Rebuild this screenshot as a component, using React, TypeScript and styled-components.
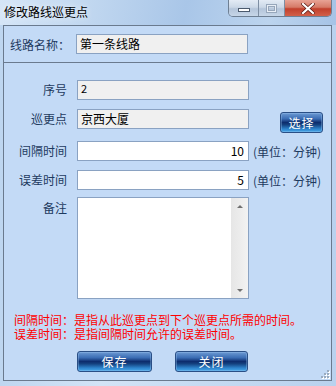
import React from "react"
import styled, { createGlobalStyle } from "styled-components"

const GlobalStyle = createGlobalStyle`
    html, body {
        margin: 0;
        padding: 0;
        background: #c9ddf2;
    }
    * {
        box-sizing: border-box;
    }
`

const font = `"Noto Sans CJK SC", "Noto Sans", sans-serif`

export default function App() {
    return (
        <>
            <GlobalStyle />
            <Window>
                <TitleBar>
                    <Title>修改路线巡更点</Title>
                    <Controls>
                        <CtrlButton $kind="min"><MinGlyph /></CtrlButton>
                        <CtrlButton $kind="max"><MaxGlyph /></CtrlButton>
                        <CtrlButton $kind="close">
                            <svg width="14" height="11" viewBox="0 0 14 11">
                                <path d="M2 1 L12 10 M12 1 L2 10" stroke="#5a1a14" strokeWidth="3.6" strokeLinecap="square" />
                                <path d="M2 1 L12 10 M12 1 L2 10" stroke="#ffffff" strokeWidth="2.2" strokeLinecap="square" />
                            </svg>
                        </CtrlButton>
                    </Controls>
                </TitleBar>
                <Client>
                    <NameSection>
                        <NameLabel>线路名称：</NameLabel>
                        <Field $readOnly $width={172}>第一条线路</Field>
                    </NameSection>
                    <DetailSection>
                        <Row $top={17}>
                            <Label>序号</Label>
                            <Field $readOnly $small>2</Field>
                        </Row>
                        <Row $top={9}>
                            <Label>巡更点</Label>
                            <Field $readOnly>京西大厦</Field>
                            <PickButton>选择</PickButton>
                        </Row>
                        <Row $top={12}>
                            <Label>间隔时间</Label>
                            <Field $right>10</Field>
                            <Unit>(单位：分钟)</Unit>
                        </Row>
                        <Row $top={9}>
                            <Label>误差时间</Label>
                            <Field $right>5</Field>
                            <Unit>(单位：分钟)</Unit>
                        </Row>
                        <Row $top={7} $alignTop>
                            <Label $pad={4}>备注</Label>
                            <MemoBox>
                                <MemoText />
                                <ScrollBar>
                                    <Arrow $up />
                                    <Arrow />
                                </ScrollBar>
                            </MemoBox>
                        </Row>
                        <Notes>
                            <NoteLine>间隔时间：是指从此巡更点到下个巡更点所需的时间。</NoteLine>
                            <NoteLine>误差时间：是指间隔时间允许的误差时间。</NoteLine>
                        </Notes>
                        <Actions>
                            <BlueButton $width={75}>保存</BlueButton>
                            <BlueButton $width={73}>关闭</BlueButton>
                        </Actions>
                        <Grip>
                            <svg width="9" height="9" viewBox="0 0 9 9">
                                {[[7, 1], [4, 4], [7, 4], [1, 7], [4, 7], [7, 7]].map(([x, y]) => (
                                    <rect key={`${x}-${y}`} x={x} y={y} width="2" height="2" fill="#ffffff" />
                                ))}
                                {[[6, 0], [3, 3], [6, 3], [0, 6], [3, 6], [6, 6]].map(([x, y]) => (
                                    <rect key={`d${x}-${y}`} x={x} y={y} width="2" height="2" fill="#9aabbf" />
                                ))}
                            </svg>
                        </Grip>
                    </DetailSection>
                </Client>
            </Window>
        </>
    )
}

const Window = styled.div`
    width: 336px;
    height: 386px;
    display: flex;
    flex-direction: column;
    background: linear-gradient(90deg, #bed6f0 0%, #d3e4f6 30%, #c6dbf2 60%, #b9d2ee 100%);
    font-family: ${font};
    overflow: hidden;
`

const TitleBar = styled.div`
    height: 25px;
    flex: none;
    display: flex;
    align-items: flex-start;
    justify-content: space-between;
    padding-left: 4px;
    background: linear-gradient(100deg, #d6e6f7 0%, #c2d8f0 25%, #a9c6e8 55%, #bcd4ee 80%, #a6c3e6 100%);
`

const Title = styled.div`
    margin-top: 4px;
    font-size: 12px;
    line-height: 16px;
    color: #000;
    text-shadow: 0 0 6px rgba(255, 255, 255, 0.9);
`

const Controls = styled.div`
    display: flex;
    margin-right: 4px;
    height: 17px;
    border: 1px solid #6e7f93;
    border-top: none;
    border-radius: 0 0 5px 5px;
    overflow: hidden;
`

const CtrlButton = styled.div<{ $kind: "min" | "max" | "close" }>`
    width: ${p => (p.$kind === "close" ? 47 : p.$kind === "max" ? 26 : 29)}px;
    display: flex;
    align-items: center;
    justify-content: center;
    border-left: ${p => (p.$kind === "min" ? "none" : "1px solid #7d8ea3")};
    background: ${p =>
        p.$kind === "close"
            ? "linear-gradient(180deg, #e8a395 0%, #d67a67 45%, #c2402c 55%, #d2604a 100%)"
            : "linear-gradient(180deg, #e3ebf5 0%, #cbd8e7 45%, #b4c5da 55%, #c6d6e8 100%)"};
`

const MinGlyph = styled.div`
    width: 12px;
    height: 4px;
    margin-top: 4px;
    background: #fff;
    border: 1px solid #4b5a6d;
`

const MaxGlyph = styled.div`
    width: 11px;
    height: 9px;
    border: 1px solid #97a7bb;
    box-shadow: inset 0 0 0 1px #e8eef6, inset 0 0 0 2px #97a7bb;
`

const Client = styled.div`
    flex: 1;
    margin: 0 4px 5px 3px;
    border: 1px solid #6a7a8e;
    background: #c3daf6;
    display: flex;
    flex-direction: column;
`

const NameSection = styled.div`
    height: 37px;
    flex: none;
    display: flex;
    align-items: center;
    padding-left: 6px;
    border-bottom: 1px solid #6a7a8e;
`

const NameLabel = styled.div`
    width: 66px;
    font-size: 12px;
    color: #1e3a5f;
`

const DetailSection = styled.div`
    flex: 1;
    position: relative;
    display: flex;
    flex-direction: column;
    padding-left: 1px;
`

const Row = styled.div<{ $top: number; $alignTop?: boolean }>`
    display: flex;
    align-items: ${p => (p.$alignTop ? "flex-start" : "center")};
    margin-top: ${p => p.$top}px;
`

const Label = styled.div<{ $pad?: number }>`
    width: 62px;
    margin-right: 10px;
    text-align: right;
    font-size: 12px;
    line-height: 14px;
    padding-top: ${p => p.$pad ?? 0}px;
    color: #1e3a5f;
`

const Field = styled.div<{ $readOnly?: boolean; $right?: boolean; $small?: boolean; $width?: number }>`
    width: ${p => p.$width ?? 172}px;
    height: 20px;
    flex: none;
    border: 1px solid #8aa2c2;
    background: ${p => (p.$readOnly ? "#f0f0f0" : "#ffffff")};
    color: #000;
    font-size: ${p => (p.$small ? 11 : 12)}px;
    line-height: ${p => (p.$small ? 13 : 17)}px;
    padding: ${p => (p.$small ? "1px 3px" : "0 4px 0 3px")};
    text-align: ${p => (p.$right ? "right" : "left")};
    white-space: nowrap;
`

const Unit = styled.div`
    margin-left: 4px;
    font-size: 12px;
    color: #1e3a5f;
    white-space: nowrap;
`

const BlueButton = styled.div<{ $width: number }>`
    width: ${p => p.$width}px;
    height: 21px;
    flex: none;
    display: flex;
    align-items: center;
    justify-content: center;
    border: 1px solid #2a4f86;
    border-radius: 3px;
    background: linear-gradient(180deg, #6d9ad3 0%, #3b6db4 30%, #0d2d6e 50%, #14417f 62%, #2f86cf 85%, #48a6e6 100%);
    box-shadow: inset 0 0 0 1px rgba(160, 200, 240, 0.35);
    color: #fff;
    font-size: 12px;
    letter-spacing: 1px;
`

const PickButton = styled(BlueButton).attrs({ $width: 43 })`
    align-self: flex-start;
    margin: 3px 0 -4px 31px;
`

const MemoBox = styled.div`
    width: 172px;
    height: 102px;
    flex: none;
    display: flex;
    border: 1px solid #8aa2c2;
    background: #fff;
`

const MemoText = styled.div`
    flex: 1;
`

const ScrollBar = styled.div`
    width: 17px;
    display: flex;
    flex-direction: column;
    justify-content: space-between;
    align-items: center;
    padding: 7px 0 6px;
    background: linear-gradient(90deg, #e6e6e6, #f2f2f2);
`

const Arrow = styled.div<{ $up?: boolean }>`
    width: 0;
    height: 0;
    border-left: 3px solid transparent;
    border-right: 3px solid transparent;
    ${p => (p.$up ? "border-bottom: 3px solid #707070;" : "border-top: 3px solid #707070;")}
`

const Notes = styled.div`
    margin-top: 14px;
    padding-left: 9px;
    display: flex;
    flex-direction: column;
    color: #ff0000;
`

const NoteLine = styled.div`
    height: 14px;
    font-size: 12px;
    line-height: 14px;
    white-space: nowrap;
`

const Actions = styled.div`
    display: flex;
    gap: 23px;
    margin-top: 10px;
    padding-left: 72px;
`

const Grip = styled.div`
    position: absolute;
    right: 1px;
    bottom: 1px;
    line-height: 0;
`
